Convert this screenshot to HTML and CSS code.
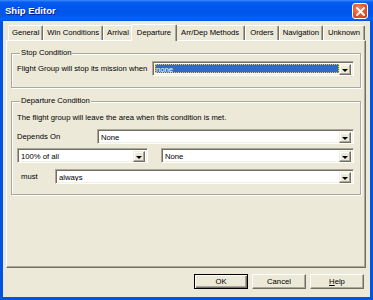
FILE: index.html
```html
<!DOCTYPE html>
<html lang="en">
<head>
  <meta charset="UTF-8">
  <title>Ship Editor</title>
  <link rel="stylesheet" href="styles.css">
</head>
<body>
  <div class="window">
    <div class="titlebar">
      <span class="title">Ship Editor</span>
      <span class="close">
        <svg width="9" height="9" viewBox="0 0 9 9"><path d="M1 1 L8 8 M8 1 L1 8" stroke="#fff" stroke-width="1.8" stroke-linecap="square"/></svg>
      </span>
    </div>
    <div class="client">
      <div class="tabs">
        <div class="tab">General</div>
        <div class="tab">Win Conditions</div>
        <div class="tab">Arrival</div>
        <div class="tab active">Departure</div>
        <div class="tab wide">Arr/Dep Methods</div>
        <div class="tab roomy">Orders</div>
        <div class="tab">Navigation</div>
        <div class="tab roomy">Unknown</div>
      </div>

      <div class="panel">
        <fieldset class="group stop-group">
          <legend>Stop Condition</legend>
          <div class="row">
            <span class="label">Flight Group will stop its mission when</span>
            <div class="combo grow focused">
              <span class="value"><span class="sel">none</span></span>
              <span class="arrow"></span>
            </div>
          </div>
        </fieldset>

        <fieldset class="group depart-group">
          <legend>Departure Condition</legend>
          <p class="hint">The flight group will leave the area when this condition is met.</p>
          <div class="row">
            <span class="label depends">Depends On</span>
            <div class="combo grow"><span class="value">None</span><span class="arrow"></span></div>
          </div>
          <div class="row">
            <div class="combo amount"><span class="value">100% of all</span><span class="arrow"></span></div>
            <div class="combo grow"><span class="value">None</span><span class="arrow"></span></div>
          </div>
          <div class="row last">
            <span class="label must">must</span>
            <div class="combo grow"><span class="value">always</span><span class="arrow"></span></div>
          </div>
        </fieldset>
      </div>

      <div class="buttons">
        <div class="btn default">OK</div>
        <div class="btn">Cancel</div>
        <div class="btn"><u>H</u>elp</div>
      </div>
    </div>
  </div>
</body>
</html>
```

FILE: styles.css
```css
body {
  margin: 0;
  font-family: "Liberation Sans", Arial, sans-serif;
  font-size: 7.7px;
  color: #000;
}
.window {
  width: 373px;
  height: 300px;
  display: flex;
  flex-direction: column;
  background: #0054e3;
}
.titlebar {
  height: 21px;
  flex: none;
  display: flex;
  align-items: center;
  justify-content: space-between;
  padding: 0 5px 0 5px;
  background: linear-gradient(#3d8cff 0, #0a5ff0 2px, #0058ee 5px, #0055ea 14px, #0063fb 19px, #0050df 21px);
}
.title {
  color: #fff;
  font-weight: bold;
  font-size: 9.5px;
  text-shadow: 1px 1px #0a1e8a;
}
.close {
  width: 14px;
  height: 14px;
  display: flex;
  align-items: center;
  justify-content: center;
  border: 1px solid #fff;
  border-radius: 3px;
  background: radial-gradient(circle at 40% 35%, #f08a6a, #e0502a 60%, #c4391a);
  margin-top: 1px;
}
.client {
  flex: 1;
  margin: 0 3px 3px;
  background: #ece9d8;
  padding: 2px 4px 0 3px;
  display: flex;
  flex-direction: column;
}
.tabs {
  display: flex;
  align-items: flex-end;
  height: 17px;
  padding-left: 2px;
  position: relative;
  z-index: 1;
}
.tab {
  height: 14px;
  line-height: 14px;
  padding: 0 3px;
  border-left: 1px solid #fff;
  border-top: 1px solid #fff;
  border-right: 1px solid #716f64;
  box-shadow: inset -1px 0 #aca899;
  border-radius: 2px 2px 0 0;
  white-space: nowrap;
}
.tab.wide {
  padding: 0 5px;
}
.tab.roomy {
  padding: 0 4px;
}
.tab.active {
  height: 16px;
  line-height: 15px;
  margin: 0 -2px -1px;
  padding: 0 5px;
  background: #ece9d8;
  position: relative;
}
.panel {
  height: 226px;
  border-left: 1px solid #fff;
  border-top: 1px solid #fff;
  border-right: 1px solid #716f64;
  border-bottom: 1px solid #716f64;
  box-shadow: inset -1px -1px #aca899;
  padding: 0 4px;
}
.group {
  margin: 0;
  padding: 0 6px 0 5px;
  border: 1px solid #aca899;
  box-shadow: inset 1px 1px #fff, 1px 1px #fff;
  min-width: 0;
}
.group legend {
  padding: 0 1px;
  margin-left: 3px;
  line-height: 10px;
  background: #ece9d8;
}
.stop-group {
  margin-top: 7px;
  height: 38px;
}
.stop-group .row {
  margin-top: 3px;
}
.depart-group {
  margin-top: 8px;
  height: 97px;
}
.row {
  display: flex;
  align-items: center;
  margin-top: 4px;
}
.row.last {
  margin-top: 6px;
}
.label {
  white-space: nowrap;
}
.stop-group .label {
  width: 135px;
}
.depends {
  width: 80px;
}
.must {
  width: 38px;
  padding-left: 4px;
  box-sizing: border-box;
}
.hint {
  margin: 7px 0 7px;
}
.combo {
  height: 15px;
  box-sizing: border-box;
  display: flex;
  background: #fff;
  border-top: 1px solid #aca899;
  border-left: 1px solid #aca899;
  border-right: 1px solid #fff;
  border-bottom: 1px solid #fff;
  box-shadow: inset 1px 1px #716f64, inset -1px -1px #f1efe2;
  padding: 2px;
}
.grow {
  flex: 1;
}
.amount {
  width: 131px;
  margin-right: 13px;
}
.value {
  flex: 1;
  line-height: 11px;
  padding-left: 1px;
  overflow: hidden;
  white-space: nowrap;
}
.focused .value {
  background: #316ac5;
  color: #fff;
  outline: 1px dotted #e8c35a;
  outline-offset: -1px;
}
.arrow {
  width: 12px;
  height: 11px;
  box-sizing: border-box;
  background: #ece9d8;
  border-top: 1px solid #f1efe2;
  border-left: 1px solid #f1efe2;
  border-right: 1px solid #716f64;
  border-bottom: 1px solid #716f64;
  box-shadow: inset -1px -1px #aca899, inset 1px 1px #fff;
  display: flex;
  align-items: center;
  justify-content: center;
}
.arrow::after {
  content: "";
  border-left: 3px solid transparent;
  border-right: 3px solid transparent;
  border-top: 3px solid #000;
  margin-top: 1px;
}
.buttons {
  display: flex;
  justify-content: flex-end;
  gap: 4px;
  margin-top: 6px;
  padding-right: 2px;
}
.btn {
  width: 54px;
  height: 15px;
  box-sizing: border-box;
  line-height: 13px;
  text-align: center;
  border-top: 1px solid #fff;
  border-left: 1px solid #fff;
  border-right: 1px solid #716f64;
  border-bottom: 1px solid #716f64;
  box-shadow: inset -1px -1px #aca899;
}
.btn.default {
  border: 1px solid #000;
  box-shadow: inset 1px 1px #fff, inset -1px -1px #716f64, inset -2px -2px #aca899;
}
```
